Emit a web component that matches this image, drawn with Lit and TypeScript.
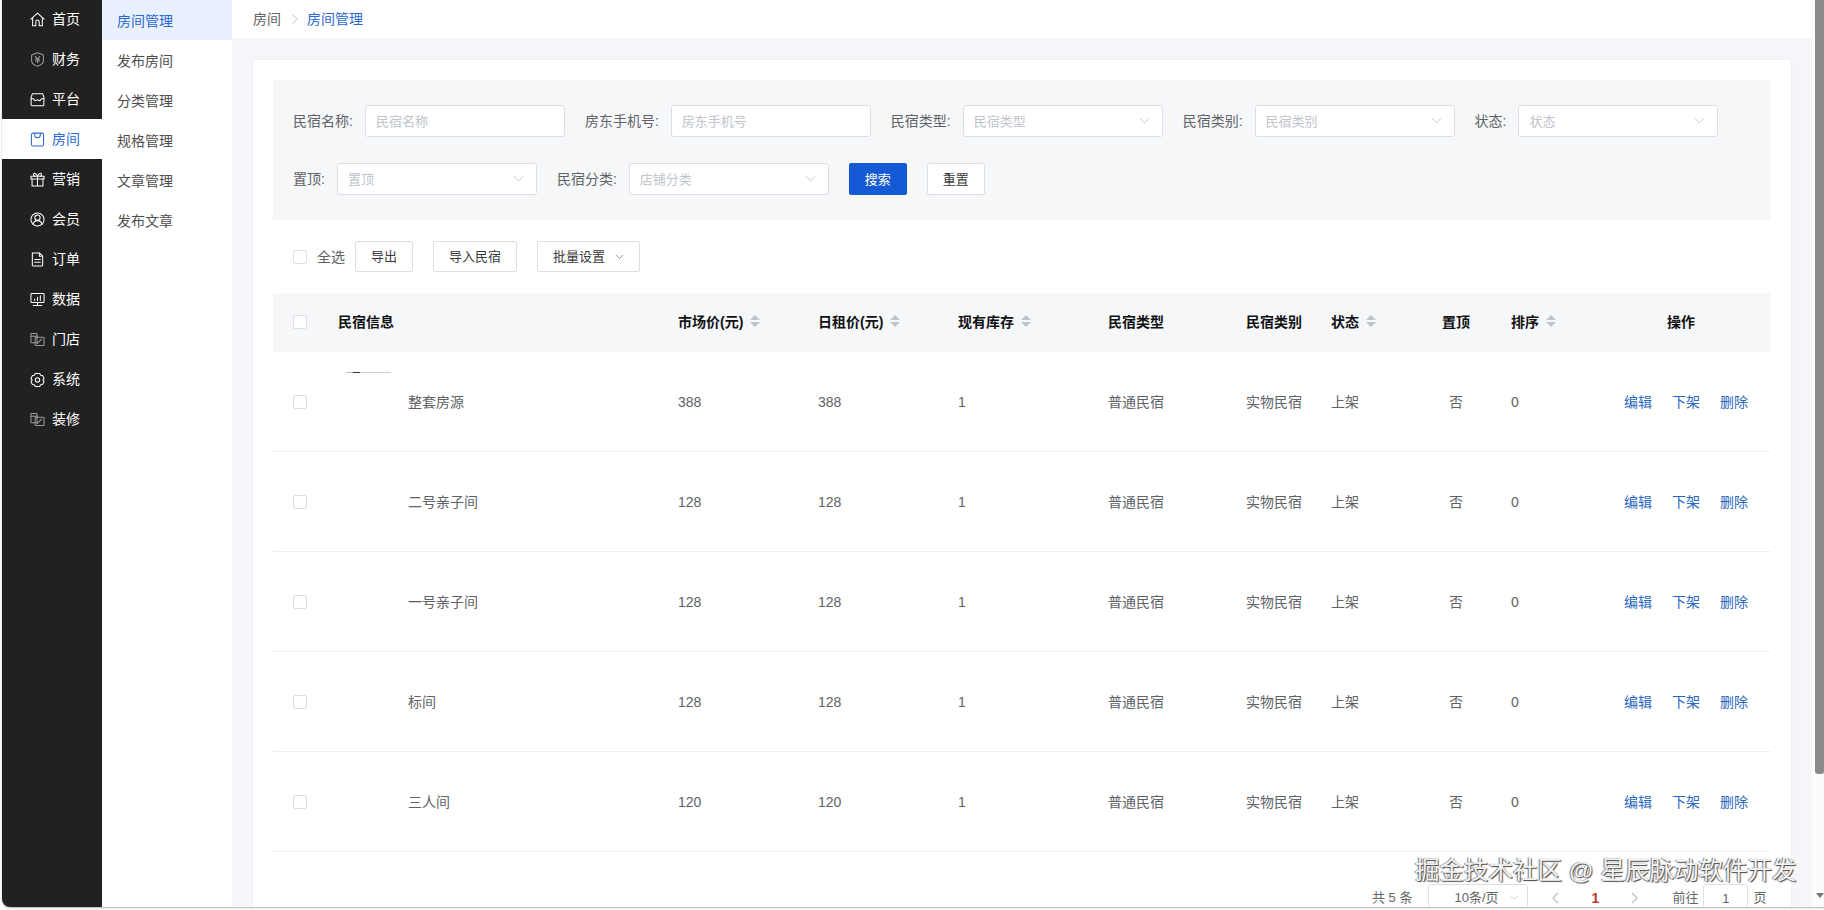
import { LitElement, html, css, svg } from "lit";
import { customElement } from "lit/decorators.js";

const icon = (body: unknown, dim = false) => html`<svg class="ico ${dim ? "dim" : ""}" viewBox="0 0 16 16" fill="none" stroke="currentColor" stroke-width="1.1" stroke-linejoin="round" stroke-linecap="round">${body}</svg>`;

const ICONS: Record<string, unknown> = {
  home: svg`<path d="M1 7.6 8 1.2l7 6.4"/><path d="M2.8 6.4v8.2h3.4v-4.2a1.8 1.8 0 0 1 3.6 0v4.2h3.4V6.4"/>`,
  finance: svg`<path d="M8 .9l6.3 2.2v6c0 3-2.6 5-6.3 6.1-3.7-1.1-6.3-3.1-6.3-6.1v-6z"/><path d="M5.6 4.6 8 7.6l2.4-3M8 7.6v3.8M5.8 7.8h4.4M5.8 9.6h4.4"/>`,
  shop: svg`<path d="M2.6 1.8h10.8l1.4 3.6v8.2c0 .6-.5 1.1-1.1 1.1H2.3c-.6 0-1.1-.5-1.1-1.1V5.400z"/><path d="M1.200 7.200h2.600c.6 1.300 1.400 2 2.200 2 .8 0 1.400-.5 2-1.200.6.700 1.200 1.200 2 1.200.8 0 1.600-.7 2.200-2h2.600"/>`,
  bag: svg`<rect x="1.500" y="1.200" width="13" height="13.800" rx="2"/><path d="M5 1.500v1.700c0 1.700 1.300 3 3 3s3-1.300 3-3V1.500"/>`,
  gift: svg`<rect x="1" y="4.500" width="14" height="3"/><path d="M2.200 7.500V15h11.600V7.500M8 4.500V15M8 4.500C6.800 2 5.500 1 4.400 1.300 3.300 1.700 3.500 3.800 5 4.500M8 4.500c1.200-2.500 2.500-3.500 3.600-3.200 1.100.4.900 2.500-.6 3.200"/>`,
  user: svg`<circle cx="8" cy="8" r="7"/><circle cx="8" cy="6" r="2.800"/><path d="M3.200 13c.6-2.400 2.500-3.800 4.800-3.800s4.200 1.400 4.800 3.800"/>`,
  doc: svg`<path d="M2.500 1h7.500l3.500 3.500v9.300c0 .7-.5 1.200-1.200 1.200H3.700c-.7 0-1.200-.5-1.200-1.200V2.200C2.500 1.500 3 1 3.700 1z"/><path d="M10 1v3.500h3.500M5 8h6M5 11h6"/>`,
  chart: svg`<rect x="1" y="1.500" width="14" height="9.800" rx="1"/><path d="M8 11.500v3M3.500 14.500h9M5 9V7.500M8 9V5.500M11 9V4"/>`,
  store: svg`<g opacity=".55"><rect x="1" y="1.500" width="6.500" height="10" rx=".8"/><rect x="5.500" y="5.500" width="9.500" height="9" rx=".8"/><path d="M7.500 12.500l5-5M1 4.500h6.500"/></g>`,
  gear: svg`<path d="M5.600 1.500h4.800l.9 2 2.100.2 1.600 3.300-1.300 1.700 1.300 1.700-1.600 3-2.100.2-.9 1.900H5.600l-.9-1.900-2.100-.2L1 10.400l1.300-1.700L1 7l1.600-3.300 2.100-.2z"/><circle cx="8" cy="8.500" r="2.300"/>`,
};

const NAV = [
  ["home", "首页"], ["finance", "财务"], ["shop", "平台"], ["bag", "房间"], ["gift", "营销"], ["user", "会员"],
  ["doc", "订单"], ["chart", "数据"], ["store", "门店"], ["gear", "系统"], ["store", "装修"],
];
const SUB = ["房间管理", "发布房间", "分类管理", "规格管理", "文章管理", "发布文章"];
const ROWS = [
  ["整套房源", "388", "388"], ["二号亲子间", "128", "128"], ["一号亲子间", "128", "128"],
  ["标间", "128", "128"], ["三人间", "120", "120"],
];

const chevron = html`<svg class="chev" viewBox="0 0 12 12" fill="none" stroke="currentColor" stroke-width="1"><path d="M1 3.500 6 8.500l5-5"/></svg>`;
const sorter = html`<span class="sort"><i class="up"></i><i class="down"></i></span>`;

@customElement("app-root")
export class AppRoot extends LitElement {
  static styles = css`
    :host { display: block; width: 1824px; height: 910px; overflow: hidden; background: #fff;
      font-family: "Liberation Sans", "Noto Sans CJK SC", sans-serif; font-size: 14px; color: #606266; }
    * { box-sizing: border-box; }
    .frame { display: flex; height: 907px; margin-left: 2px; overflow: hidden; border-bottom-left-radius: 8px; box-shadow: 0 1px 2px rgba(0,0,0,.3); }
    .side { width: 100px; flex: none; background: #212121; color: #fff; margin-top: -1px; }
    .side a { display: flex; align-items: center; height: 40px; padding: 0 0 2px 28px; gap: 7px; }
    .side a.on { background: #fff; color: #2a68cf; }
    .ico { width: 15px; height: 15px; flex: none; margin-top: 2px; }
    .ico.dim { color: #9a9a9a; }
    .sub { width: 130px; flex: none; background: #fff; color: #4d4d4d; }
    .sub a { display: flex; align-items: center; height: 40px; padding-left: 15px; }
    .sub a.on { background: #e8f0fd; color: #2a68cf; }
    .main { flex: 1; min-width: 0; display: flex; flex-direction: column; background: #f5f6fa; }
    .crumb { height: 38px; flex: none; background: #fff; display: flex; align-items: center; padding: 0 0 2px 21px; }
    .crumb svg { width: 10px; height: 10px; margin: 2px 7px 0 9px; color: #c0c4cc; }
    .crumb b { font-weight: 400; color: #2a68cf; }
    .body { flex: 1; min-height: 0; padding: 22px 21px 0; display: flex; }
    .card { flex: 1; min-width: 0; background: #fff; padding: 20px 21px 0 20px; overflow: hidden; box-shadow: 0 0 2px rgba(0,0,0,.06); }
    .filter { height: 140px; background: #f5f7f9; padding: 25px 20px; display: flex; flex-wrap: wrap; column-gap: 20px; row-gap: 26px; align-content: flex-start; }
    .item { display: flex; align-items: center; gap: 12px; height: 32px; }
    .lb { margin-bottom: 2px; }
    .ctl { width: 200px; height: 32px; background: #fff; border: 1px solid #dcdfe6; border-radius: 3px; padding: 0 12px 2px 10px; display: flex; align-items: center; justify-content: space-between; color: #c0c4cc; font-size: 13px; }
    .chev { width: 11px; height: 11px; color: #c0c4cc; flex: none; }
    .btn { height: 32px; padding: 0 15px 2px; border: 1px solid #dcdfe6; border-radius: 2px; background: #fff; color: #3a3a3a; font-size: 13px; display: inline-flex; align-items: center; }
    .btn.pri { background: #1559d4; border-color: #1559d4; color: #fff; }
    .bar { display: flex; align-items: center; margin-top: 21px; height: 31px; gap: 20px; }
    .bar .btn { height: 31px; }
    .bar .btn .chev { width: 9px; height: 9px; margin: 2px 0 0 10px; color: #777; }
    .all { display: flex; align-items: center; padding-left: 20px; gap: 10px; margin-right: -10px; }
    .all em { font-style: normal; margin-bottom: 2px; }
    .cb { width: 14px; height: 14px; background: #fff; border: 1px solid #dcdfe6; border-radius: 2px; display: block; }
    .tbl { margin-top: 21px; }
    .tr { display: grid; grid-template-columns: 65px 340px 140px 140px 150px 138px 85px 70px 110px 113px 146px; align-items: center; padding-bottom: 2px; }
    .th { height: 59px; background: #f5f7f9; color: #111; font-weight: 700; padding-bottom: 4px; }
    .row { height: 100px; border-bottom: 1px solid #ebeef5; }
    .first { padding: 2px 0 0 20px; }
    .num { padding-top: 2px; }
    .c { text-align: center; }
    .op { text-align: center; padding-right: 32px; }
    .hd { display: flex; align-items: center; gap: 7px; }
    .sort { display: flex; flex-direction: column; gap: 2px; }
    .sort i { display: block; width: 0; height: 0; border-left: 5px solid transparent; border-right: 5px solid transparent; }
    .sort .up { border-bottom: 5px solid #c0c4cc; }
    .sort .down { border-top: 5px solid #c0c4cc; }
    .name { display: flex; align-items: center; padding-left: 8px; }
    .thumb { width: 45px; height: 60px; margin: 2px 17px 0 0; flex: none; }
    .thumb.line { background: linear-gradient(90deg, #bbb 0 7px, #333 7px 14px, #ccc 14px) top / 100% 1px no-repeat; }
    .acts { display: flex; gap: 20px; color: #2a68c0; }
    .pager { display: flex; align-items: flex-start; margin-top: 32px; height: 32px; padding-left: 1099px; font-size: 13px; line-height: 27px; color: #666; }
    .psel { width: 100px; height: 32px; margin-left: 16px; border: 1px solid #dcdfe6; border-radius: 3px; padding: 0 8px 5px 25px; display: flex; align-items: center; justify-content: space-between; font-size: 13px; }
    .psel .chev { width: 9px; height: 9px; }
    .pnav { width: 144px; display: flex; justify-content: space-between; align-items: center; height: 28px; padding: 0 33px 0 23px; color: #c0c4cc; }
    .pnav svg { width: 10px; height: 12px; }
    .pnav b { color: #c0392b; font-size: 14px; }
    .pinp { width: 45px; height: 32px; margin: 0 5px 0 5px; border: 1px solid #dcdfe6; border-radius: 3px; text-align: center; }
    .scroll { width: 12px; flex: none; background: #fcfcfc; padding-left: 3px; display: flex; flex-direction: column; }
    .thumbbar { height: 774px; background: #8b8b8b; border-radius: 0 0 3px 3px; }
    .arrow { width: 0; height: 0; margin: 119px 0 0 1px; border-left: 4px solid transparent; border-right: 4px solid transparent; border-top: 5px solid #777; }
    .mark { position: absolute; left: 1415px; top: 856px; font-size: 24.5px; line-height: 30px; white-space: nowrap; color: #f4f4f4; text-shadow: 1px 1px 1px #444, -1px 0 1px #777; }
  `;

  render() {
    return html`
      <div class="frame">
        <nav class="side">
          ${NAV.map(([k, t]) => html`<a class=${k === "bag" ? "on" : ""}>${icon(ICONS[k], k === "finance")}<span>${t}</span></a>`)}
        </nav>
        <nav class="sub">
          ${SUB.map((t, i) => html`<a class=${i === 0 ? "on" : ""}>${t}</a>`)}
        </nav>
        <main class="main">
          <div class="crumb">房间<svg viewBox="0 0 10 10" fill="none" stroke="currentColor"><path d="M2.500 0.500 7.500 5l-5 4.500"/></svg><b>房间管理</b></div>
          <div class="body">
            <section class="card">
              <div class="filter">
                <div class="item"><span class="lb">民宿名称:</span><div class="ctl">民宿名称</div></div>
                <div class="item"><span class="lb">房东手机号:</span><div class="ctl">房东手机号</div></div>
                <div class="item"><span class="lb">民宿类型:</span><div class="ctl">民宿类型${chevron}</div></div>
                <div class="item"><span class="lb">民宿类别:</span><div class="ctl">民宿类别${chevron}</div></div>
                <div class="item"><span class="lb">状态:</span><div class="ctl">状态${chevron}</div></div>
                <div class="item"><span class="lb">置顶:</span><div class="ctl">置顶${chevron}</div></div>
                <div class="item"><span class="lb">民宿分类:</span><div class="ctl">店铺分类${chevron}</div></div>
                <span class="btn pri">搜索</span>
                <span class="btn">重置</span>
              </div>
              <div class="bar">
                <label class="all"><span class="cb"></span><em>全选</em></label>
                <span class="btn">导出</span>
                <span class="btn">导入民宿</span>
                <span class="btn">批量设置${chevron}</span>
              </div>
              <div class="tbl">
                <div class="tr th">
                  <div class="first"><span class="cb"></span></div>
                  <div>民宿信息</div>
                  <div class="hd">市场价(元)${sorter}</div>
                  <div class="hd">日租价(元)${sorter}</div>
                  <div class="hd">现有库存${sorter}</div>
                  <div>民宿类型</div>
                  <div>民宿类别</div>
                  <div class="hd">状态${sorter}</div>
                  <div class="c">置顶</div>
                  <div class="hd">排序${sorter}</div>
                  <div class="op">操作</div>
                </div>
                ${ROWS.map(([n, a, b], i) => html`
                  <div class="tr row">
                    <div class="first"><span class="cb"></span></div>
                    <div class="name"><span class="thumb ${i === 0 ? "line" : ""}"></span>${n}</div>
                    <div class="num">${a}</div>
                    <div class="num">${b}</div>
                    <div class="num">1</div>
                    <div>普通民宿</div>
                    <div>实物民宿</div>
                    <div>上架</div>
                    <div class="c">否</div>
                    <div class="num">0</div>
                    <div class="acts"><span>编辑</span><span>下架</span><span>删除</span></div>
                  </div>`)}
              </div>
              <div class="pager">
                <span>共 5 条</span>
                <div class="psel">10条/页${chevron}</div>
                <div class="pnav">
                  <svg viewBox="0 0 10 12" fill="none" stroke="currentColor" stroke-width="1.400"><path d="M7 1 2 6l5 5"/></svg>
                  <b>1</b>
                  <svg viewBox="0 0 10 12" fill="none" stroke="currentColor" stroke-width="1.400"><path d="M3 1l5 5-5 5"/></svg>
                </div>
                <span>前往</span>
                <div class="pinp">1</div>
                <span>页</span>
              </div>
            </section>
          </div>
        </main>
        <div class="scroll"><div class="thumbbar"></div><div class="arrow"></div></div>
      </div>
      <div class="mark">掘金技术社区 @ 星辰脉动软件开发</div>
    `;
  }
}
